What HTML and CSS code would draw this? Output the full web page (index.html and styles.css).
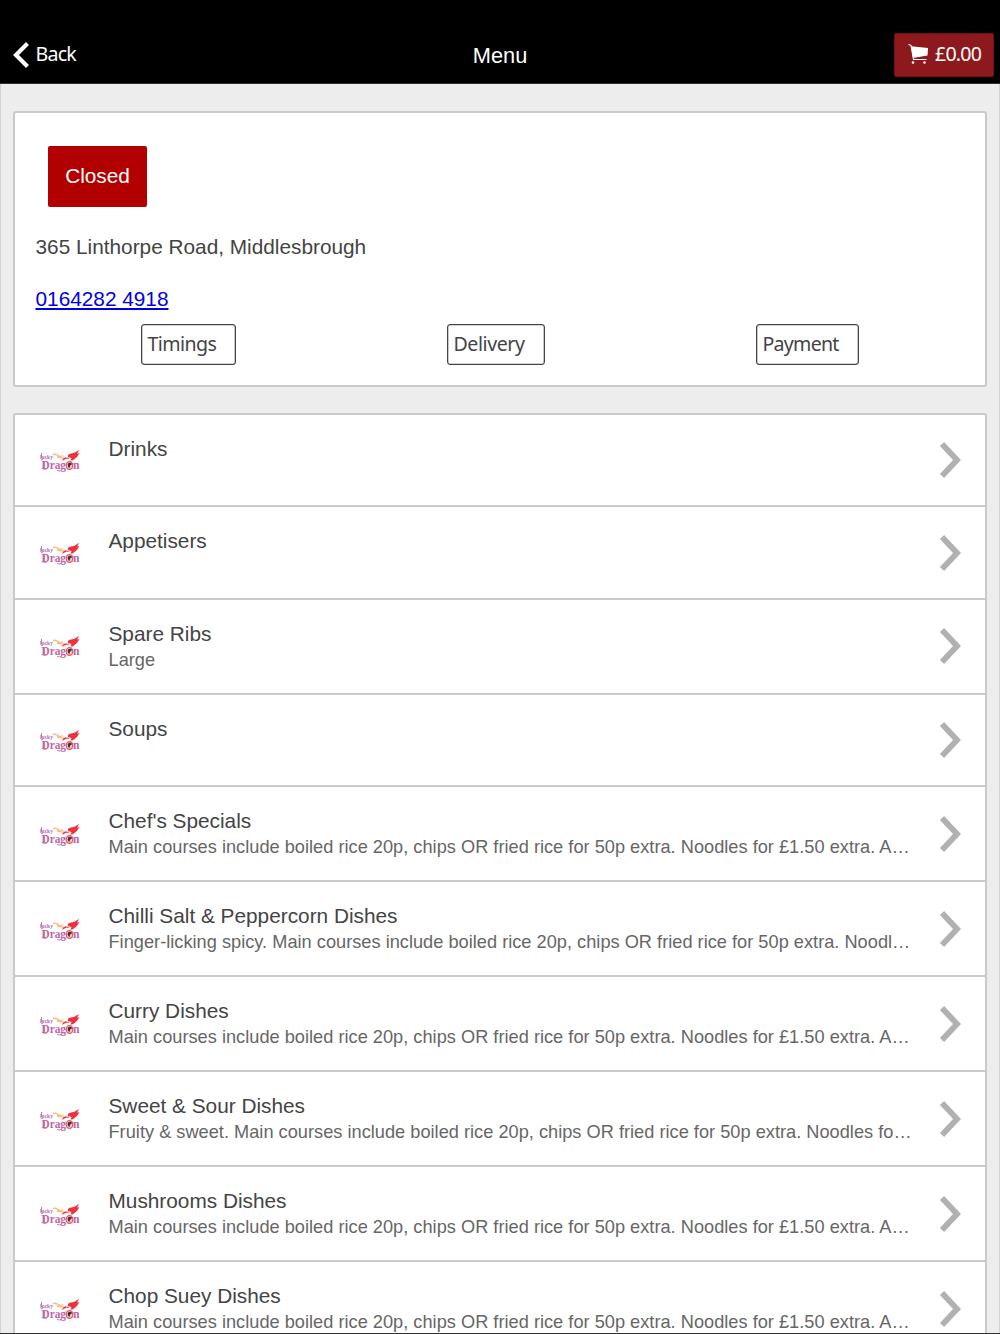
FILE: index.html
```html
<!DOCTYPE html>
<html lang="en">
<head>
<meta charset="utf-8">
<title>Menu</title>
<link rel="stylesheet" href="styles.css">
</head>
<body>
<header class="bar">
  <a class="back"><svg width="18" height="28" viewBox="0 0 18 28"><path d="M15.500 2.500 L4 14 L15.500 25.500" fill="none" stroke="#fff" stroke-width="4.200"/></svg><span>Back</span></a>
  <h1>Menu</h1>
  <a class="cart"><svg width="22" height="22" viewBox="0 0 22 22"><path d="M3 3.300 L20 5 L19.500 12.500 L5 15z" fill="#fff"/><path d="M.5 1.500 L3 2.300 L5.500 16.500 H18.500" fill="none" stroke="#fff" stroke-width="1.100"/><circle cx="5" cy="19.500" r="1.300" fill="#fff"/><circle cx="16.500" cy="19.500" r="1.300" fill="#fff"/></svg><span>£0.00</span></a>
</header>
<main>
  <section class="panel info">
    <div class="status">Closed</div>
    <p class="address">365 Linthorpe Road, Middlesbrough</p>
    <a class="phone">0164282 4918</a>
    <div class="actions">
      <a class="timings">Timings</a>
      <a class="delivery">Delivery</a>
      <a class="payment">Payment</a>
    </div>
  </section>
  <ul class="panel list">
    <li>
      <svg class="logo" viewBox="0 0 42 24">
        <g id="dragon">
          <path d="M13 4.500q3-1 5 1t5 0M17 7q4 1 7 1" fill="none" stroke="#f9bd83" stroke-width="1.500"/>
          <path d="M22 11q1-4 6-4-1-3 3-3.500 3-.5 4-1 2-2 4.500-2.500-2.500 2-2 4 1-1 2-1-2 4-5 6-2 2-4 1.500l1-2.500q-2-1-3 1-2-1-6.500 2z" fill="#f0303c"/>
          <path d="M26 8q2-1 4 0" fill="none" stroke="#fff" stroke-width=".8"/>
          <ellipse cx="29.500" cy="15.500" rx="3.300" ry="3.900" fill="#f7c5c5" stroke="#ec5863" stroke-width="1.300"/>
          <path d="M28 13.500q3-2 4.500 1-2.500-.5-3 3.500-2.500-1.500-1.500-4.500z" fill="#36343b"/>
          <text x="0" y="8.500" class="logo-small" textLength="13" lengthAdjust="spacingAndGlyphs">lucky</text>
          <text x="1.500" y="18.600" class="logo-word" textLength="24.500" lengthAdjust="spacingAndGlyphs">Drag</text>
          <text x="33" y="18.600" class="logo-word" textLength="6.500" lengthAdjust="spacingAndGlyphs">n</text>
          <path d="M1.500 3V8M1 10l2-1M2 18.500q2 1.500 5 .5M17 20.500q3 1.500 5-1M4.500 11v7" fill="none" stroke="#c878aa" stroke-width="1"/>
        </g>
      </svg>
      <div class="text"><h2>Drinks</h2></div>
      <svg class="go" viewBox="0 0 24 40"><path id="chevron" d="M3 4 L18 20 L3 36" fill="none" stroke="#b1b1b1" stroke-width="5.800"/></svg>
    </li>
    <li><svg class="logo"><use href="#dragon"/></svg><div class="text"><h2>Appetisers</h2></div><svg class="go"><use href="#chevron"/></svg></li>
    <li class="tall"><svg class="logo"><use href="#dragon"/></svg><div class="text"><h2>Spare Ribs</h2><p>Large</p></div><svg class="go"><use href="#chevron"/></svg></li>
    <li><svg class="logo"><use href="#dragon"/></svg><div class="text"><h2>Soups</h2></div><svg class="go"><use href="#chevron"/></svg></li>
    <li class="tall"><svg class="logo"><use href="#dragon"/></svg><div class="text"><h2>Chef's Specials</h2><p>Main courses include boiled rice 20p, chips OR fried rice for 50p extra. Noodles for £1.50 extra. A…</p></div><svg class="go"><use href="#chevron"/></svg></li>
    <li class="tall"><svg class="logo"><use href="#dragon"/></svg><div class="text"><h2>Chilli Salt &amp; Peppercorn Dishes</h2><p>Finger-licking spicy. Main courses include boiled rice 20p, chips OR fried rice for 50p extra. Noodl…</p></div><svg class="go"><use href="#chevron"/></svg></li>
    <li class="tall"><svg class="logo"><use href="#dragon"/></svg><div class="text"><h2>Curry Dishes</h2><p>Main courses include boiled rice 20p, chips OR fried rice for 50p extra. Noodles for £1.50 extra. A…</p></div><svg class="go"><use href="#chevron"/></svg></li>
    <li class="tall"><svg class="logo"><use href="#dragon"/></svg><div class="text"><h2>Sweet &amp; Sour Dishes</h2><p>Fruity &amp; sweet. Main courses include boiled rice 20p, chips OR fried rice for 50p extra. Noodles fo…</p></div><svg class="go"><use href="#chevron"/></svg></li>
    <li class="tall"><svg class="logo"><use href="#dragon"/></svg><div class="text"><h2>Mushrooms Dishes</h2><p>Main courses include boiled rice 20p, chips OR fried rice for 50p extra. Noodles for £1.50 extra. A…</p></div><svg class="go"><use href="#chevron"/></svg></li>
    <li class="tall"><svg class="logo"><use href="#dragon"/></svg><div class="text"><h2>Chop Suey Dishes</h2><p>Main courses include boiled rice 20p, chips OR fried rice for 50p extra. Noodles for £1.50 extra. A…</p></div><svg class="go"><use href="#chevron"/></svg></li>
  </ul>
</main>
</body>
</html>
```
FILE: styles.css
```css
* { box-sizing: border-box; }
html { height: 1334px; overflow: hidden; }
body {
  margin: 0;
  height: 1334px;
  overflow: hidden;
  display: flex;
  flex-direction: column;
  background: #ededed;
  color: #444;
  font: 20.8px/26px "Liberation Sans", Arial, sans-serif;
  border-bottom: 1px solid #333;
}
h1, h2, p, ul { margin: 0; padding: 0; font-weight: 400; }
.bar {
  flex: none;
  height: 84px;
  padding: 33px 6px 0 12px;
  display: grid;
  grid-template-columns: 1fr auto 1fr;
  align-items: start;
  background: #000;
  border-bottom: 1px solid #333;
  color: #fff;
  font-family: "Noto Sans", "Open Sans", sans-serif;
  font-size: 19.6px;
}
.back { display: flex; gap: 5.5px; padding-top: 8px; letter-spacing: -0.8px; }
.bar h1 {
  margin-left: -6px;
  padding-top: 10px;
  font: 21.8px/26px "Liberation Sans", Arial, sans-serif;
}
.cart {
  justify-self: end;
  display: flex;
  gap: 5px;
  width: 100px;
  height: 44px;
  padding: 7px 0 0 13px;
  background: #8e191c;
  border: 1px solid #741013;
  border-radius: 2px;
  letter-spacing: -0.8px;
}
.cart svg { margin-top: 2px; }
main {
  flex: 1;
  min-height: 0;
  padding: 27px 12px 0;
  border: solid #d3d3d3;
  border-width: 0 1px;
  overflow: hidden;
}
.panel { background: #fff; border: 2px solid #cacaca; border-radius: 3px; }
.info { height: 276px; padding: 33px 20.5px 0; }
.status {
  width: 99px;
  height: 61px;
  margin-left: 12.5px;
  background: #b20000;
  border-radius: 2px;
  color: #fff;
  text-align: center;
  line-height: 59px;
}
.address { margin-top: 27px; }
.phone { display: block; width: max-content; margin-top: 26px; color: #0000e6; text-decoration: underline; }
.actions { display: flex; padding: 12px 0 0 105px; font-family: "Noto Sans", "Open Sans", sans-serif; font-size: 19.6px; }
.actions a { height: 41px; padding: 6px 0 0 6px; border: 1px solid #444; border-radius: 3px; box-shadow: inset 0 0 0 .3px #444; }
.timings { width: 95px; letter-spacing: -0.6px; }
.delivery { width: 98px; margin-left: 211px; letter-spacing: -0.45px; }
.payment { width: 103px; margin-left: 211px; letter-spacing: -0.75px; }
.list { margin-top: 26px; list-style: none; }
.list li {
  display: flex;
  align-items: center;
  height: 92.4px;
  padding: 0 22px 0 25px;
  border-bottom: 2px solid #cacaca;
}
.list li.tall { height: 95px; }
.logo { width: 42px; height: 24px; margin-top: 4px; flex: none; }
.text { align-self: stretch; flex: 1; min-width: 0; padding: 21px 0 0 26.5px; }
.text h2 { font-size: 20.8px; line-height: 26px; }
.text p { font-size: 18.2px; line-height: 26px; letter-spacing: 0.015px; color: #666; white-space: nowrap; }
.go { width: 24px; height: 40px; flex: none; }
.logo-small { font: bold 7px "Liberation Serif", serif; fill: #b56cae; }
.logo-word { font: bold 12px "Liberation Serif", serif; fill: #bf66a5; }
```
